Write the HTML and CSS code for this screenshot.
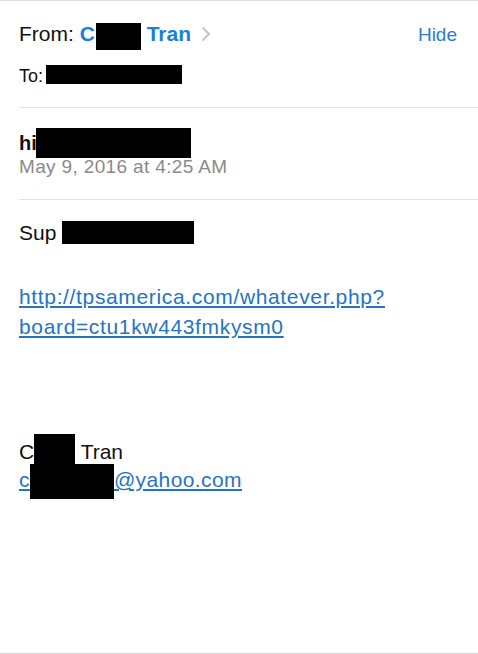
FILE: index.html
```
<!DOCTYPE html>
<html lang="en">
<head>
  <meta charset="UTF-8" />
  <title>Message</title>
  <link rel="stylesheet" href="styles.css">
</head>
<body>
  <div class="mail">
    <div class="mail-head">
      <div class="from-row">
        <div class="from">
          From: <span class="sender">C<span class="redact redact-sender"></span> Tran</span>
          <svg class="chevron" width="10" height="16" viewBox="0 0 10 16" aria-hidden="true">
            <polyline points="1.5,1.5 8,8 1.5,14.5" fill="none" stroke="#c4c4c9" stroke-width="2" />
          </svg>
        </div>
        <a class="hide-link" href="#">Hide</a>
      </div>
      <div class="to">To:<span class="redact redact-to"></span></div>
    </div>

    <div class="mail-subject">
      <div class="subject">hi<span class="redact redact-subject"></span></div>
      <div class="date">May 9, 2016 at 4:25 AM</div>
    </div>

    <div class="mail-body">
      <p class="line">Sup <span class="redact redact-greet"></span></p>
      <p class="link-block">
        <a href="#">http://tpsamerica.com/whatever.php?<br>board=ctu1kw443fmkysm0</a>
      </p>
      <p class="line sign">C<span class="redact redact-name"></span> Tran</p>
      <p class="line"><a href="#">c<span class="redact redact-mail"></span>@yahoo.com</a></p>
    </div>
  </div>
</body>
</html>
```

FILE: styles.css
```
* {
  box-sizing: border-box;
}
body {
  margin: 0;
  background: #fff;
  color: #111;
  font-family: "Liberation Sans", Arial, sans-serif;
}
.mail {
  height: 654px;
  border-top: 1px solid #dcdcdc;
  border-bottom: 1px solid #d4d4d4;
}

/* header */
.mail-head {
  margin-left: 19px;
  padding-top: 19px;
  padding-bottom: 19px;
  border-bottom: 1px solid #e3e3e3;
}
.from-row {
  display: flex;
  justify-content: space-between;
  align-items: baseline;
  padding-right: 21px;
  height: 28px;
  line-height: 28px;
}
.from {
  font-size: 21px;
  white-space: nowrap;
}
.sender {
  color: #1b7fd9;
  font-weight: bold;
}
.chevron {
  margin-left: 4px;
  vertical-align: -1px;
}
.hide-link {
  font-size: 19px;
  color: #2a7dd0;
  text-decoration: none;
}
.to {
  margin-top: 16px;
  font-size: 18px;
  line-height: 24px;
}

/* subject */
.mail-subject {
  margin-left: 19px;
  padding-top: 20px;
  padding-bottom: 19px;
  border-bottom: 1px solid #e3e3e3;
}
.subject {
  font-size: 20px;
  font-weight: bold;
  line-height: 26px;
  height: 26px;
}
.date {
  font-size: 19px;
  line-height: 26px;
  letter-spacing: 0.35px;
  color: #8a8a8a;
}

/* body */
.mail-body {
  padding: 18px 0 0 19px;
  font-size: 21px;
  line-height: 30px;
}
.mail-body p {
  margin: 0;
}
.line {
  height: 30px;
}
.link-block {
  margin-top: 34px !important;
  letter-spacing: 0.65px;
}
.mail-body a {
  color: #2474c6;
  text-decoration: underline;
  text-underline-offset: 2px;
}
.sign {
  margin-top: 92px !important;
}
.mail-body .line a {
  letter-spacing: 0.4px;
}

/* redaction boxes */
.redact {
  display: inline-block;
  background: #000;
}
.redact-sender {
  width: 45px;
  height: 27px;
  margin-left: 1px;
  vertical-align: -9px;
}
.redact-to {
  width: 136px;
  height: 19px;
  margin-left: 3px;
  vertical-align: -2px;
}
.redact-subject {
  width: 155px;
  height: 30px;
  margin-left: -1px;
  vertical-align: -8px;
}
.redact-greet {
  width: 132px;
  height: 23px;
  vertical-align: -4px;
}
.redact-name {
  width: 41px;
  height: 32px;
  vertical-align: -7px;
}
.redact-mail {
  width: 84px;
  height: 35px;
  vertical-align: -12px;
}
```
